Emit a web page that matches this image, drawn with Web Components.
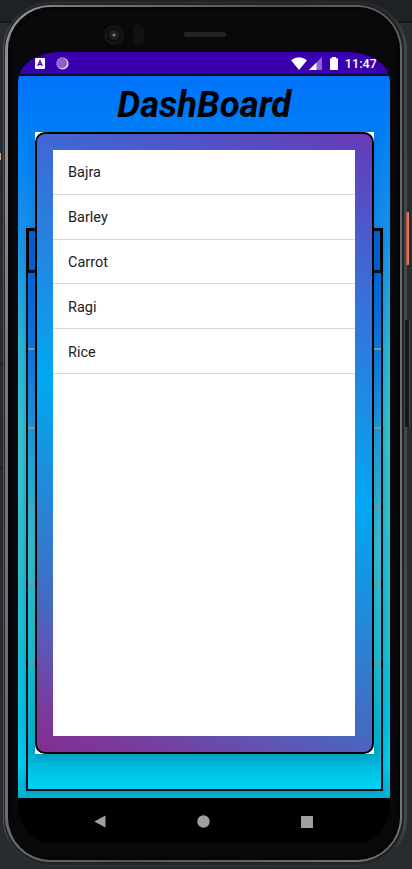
<!DOCTYPE html>
<html lang="en"><head><meta charset="utf-8"><title>DashBoard</title>
<style>html,body{margin:0;background:#24292d}body{width:412px;height:869px;overflow:hidden;font-family:Roboto,sans-serif}</style></head>
<body>
<phone-frame>
  <status-bar></status-bar>
  <dash-board heading="DashBoard">
    <crop-dialog>
      <crop-row>Bajra</crop-row><crop-row>Barley</crop-row><crop-row>Carrot</crop-row><crop-row>Ragi</crop-row><crop-row>Rice</crop-row>
    </crop-dialog>
  </dash-board>
  <nav-bar></nav-bar>
</phone-frame>
<script>
function define(name, html){
  customElements.define(name, class extends HTMLElement{
    constructor(){super();this.attachShadow({mode:'open'}).innerHTML=html;}
    connectedCallback(){const h=this.shadowRoot.querySelector('h1');if(h)h.textContent=this.getAttribute('heading');}
  });
}
define('phone-frame',`<style>
:host{display:block;position:relative;width:412px;height:869px;overflow:hidden;background:linear-gradient(#1e2226 0 21px,#15181b 21px 23px,#272c30 23px 100%)}
.shell{box-sizing:border-box;width:404px;height:864px;margin:2px 0 0 3px;position:absolute;border-radius:48px;padding:1px 3px 1px 1px;background:linear-gradient(90deg,#555 0,#343638 10px,#2c2e30 390px,#484848)}
.rim{box-sizing:border-box;height:100%;border-radius:47px;background:#222426;padding:2px 2px 3px 1px}
.metal{box-sizing:border-box;height:100%;border-radius:46px;padding:2px 2px 2px 3px;background:linear-gradient(100deg,#8b8b8b 0,#929292 4%,#777 12%,#555 50%,#777 100%)}
.bezel{box-sizing:border-box;height:100%;border-radius:43px;background:#09090b;padding:45px 0 12px 10.4px;box-shadow:inset 0 0 5px #000}
.screen{width:371.6px;height:791px;border-radius:42px 42px 32px 32px/29px 29px 40px 40px;overflow:hidden;background:#000;display:flex;flex-direction:column}
.lay{position:absolute}
.cam{left:104px;top:25px;width:20px;height:20px;border-radius:50%;background:radial-gradient(circle,#777 0 1px,#1c2023 2px 4px,#0d0e10 6px 7px,#141517 8px)}
.sen{left:133px;top:24px;width:11px;height:21px;border-radius:5px;background:#111113}
.spk{left:184px;top:32px;width:42px;height:5px;border-radius:2px;background:#232324}
.power{left:406px;top:212px;width:3px;height:53px;background:linear-gradient(90deg,#a8503d,#ef8c76);border-radius:1px}
.vol{left:405px;top:320px;width:5px;height:107px;background:#151719;border-right:1px solid #4b4d4f;box-sizing:border-box}
.dot{left:0;top:153px;width:1px;height:7px;background:#c9a184}
.line{left:0;width:3px;height:1px;background:#15181a}
</style>
<div class="lay dot"></div><div class="lay line" style="top:364px"></div><div class="lay line" style="top:468px"></div>
<div class="shell"><div class="rim"><div class="metal"><div class="bezel"><div class="screen"><slot></slot></div></div></div></div></div>
<div class="lay cam"></div><div class="lay sen"></div><div class="lay spk"></div><div class="lay power"></div><div class="lay vol"></div>`);
define('status-bar',`<style>
:host{display:flex;align-items:center;height:22px;box-sizing:border-box;padding:0 12.2px 0 17px;background:#3a00b0;color:#fff;flex:none}
svg{display:block;flex:none}.sp{flex:1}span{font-size:12.7px;font-weight:500;line-height:22px;width:33px;white-space:nowrap;padding-top:1px}
</style>
<svg width="10" height="11" viewBox="0 0 10 11"><rect width="10" height="11" rx="1" fill="#fff"/><path d="M2.8 8 5 2.8 7.2 8M3.6 6.4h2.8" fill="none" stroke="#3a00b0" stroke-width="1.3"/></svg>
<svg style="margin-left:10.5px" width="13" height="13" viewBox="0 0 13 13"><circle cx="6.7" cy="6.7" r="5.9" fill="#e0d3f5"/><circle cx="5.9" cy="5.9" r="5.3" fill="#8763cb"/><circle cx="6.1" cy="6.1" r="5.3" fill="none" stroke="#d5c4ee" stroke-width=".9" stroke-dasharray="1 1"/></svg>
<div class="sp"></div>
<svg width="16" height="13" viewBox="0 0 16 13"><path d="M0 3.2Q8-2.8 16 3.2L8 13Z" fill="#fff"/></svg>
<svg style="margin-left:2px" width="13" height="13" viewBox="0 0 13 13"><path d="M0 13 13 0V13Z" fill="#8c68cf"/><path d="M0 13 7.5 5.5V13Z" fill="#fff"/></svg>
<svg style="margin:0 7px 0 8px" width="8" height="13" viewBox="0 0 8 13"><path d="M2 0h4v1.3h1.3q.7 0 .7.7v10.3q0 .7-.7.7H.7q-.7 0-.7-.7V2q0-.7.7-.7H2Z" fill="#fff"/></svg>
<span>11:47</span>`);
define('dash-board',`<style>
:host{display:grid;grid-template:724px/371.6px;height:724px;flex:none;box-sizing:border-box;overflow:hidden;background:linear-gradient(#0072fa 0,#0080f5 60px,#168eea 150px,#2eb6d9 275px,#36c4d0 370px,#23bfd4 550px,#00c5e5 650px,#00d0f5 690px,#00b0d2 724px)}
.back,.front{grid-area:1/1;min-width:0;display:flex;flex-direction:column}
.back{padding:154px 7px 7px 7.6px}
.field{height:45px;box-sizing:border-box;border:3px solid #000;background:#0064d5;box-shadow:0 0 6px #0048a555;flex:none}
.panel{flex:1;border:2px solid #04101c;border-top:0;background:linear-gradient(#0067dc 0,#127ddd 90px,#24a7d8 190px,#35bfcf 270px,#20bdd1 380px,#00b5d5 470px,#00afd0 480px,#00d3f7 515px);box-shadow:0 0 7px #005d7a66;display:flex;flex-direction:column;padding-top:75px;gap:76.5px}
.panel i{height:2px;background:#7f9b9f;flex:none}
.front{z-index:1}
h1{margin:0;height:58px;box-sizing:border-box;padding-top:8px;text-align:center;font:italic 700 36.5px/42px Roboto,sans-serif;color:#000;border-top:2px solid #03102a}
::slotted(crop-dialog){margin-left:16.6px}
</style><div class="back"><div class="field"></div><div class="panel"><i></i><i></i><i></i><i></i><i></i></div></div>
<div class="front"><h1></h1><slot></slot></div>`);
define('crop-dialog',`<style>
:host{display:block;width:338.9px;height:622px;background:#fff;box-shadow:0 4px 10px #00304a2e}
.edge{height:100%;box-sizing:border-box;border:2px solid #000;border-radius:10px;padding:16px;background:linear-gradient(22deg,#852c90 0,#7a3a9c 6%,#5c58b6 15%,#4569c0 20%,#00a8f3 50%,#3f68d5 81%,#6938b5 100%) border-box}
.list{height:586px;width:302.2px;background:#fff}
</style><div class="edge"><div class="list"><slot></slot></div></div>`);
define('crop-row',`<style>:host{display:flex;align-items:center;height:44.8px;box-sizing:border-box;padding:2px 0 0 15px;border-bottom:1px solid #dadada;font-size:14.5px;color:#212121}</style><slot></slot>`);
define('nav-bar',`<style>:host{display:flex;justify-content:center;align-items:center;height:48px;background:#000;gap:91px;flex:none;box-sizing:border-box;padding:0 1px 1px 0}svg{display:block}</style>
<svg width="12" height="13" viewBox="0 0 12 13"><path d="M11.5.5v12L.3 6.5Z" fill="#a0a0a0"/></svg>
<svg width="13" height="13"><circle cx="6.5" cy="6.5" r="6.2" fill="#a0a0a0"/></svg>
<svg width="12" height="12"><rect width="12" height="12" rx=".6" fill="#a0a0a0"/></svg>`);
</script></body></html>
